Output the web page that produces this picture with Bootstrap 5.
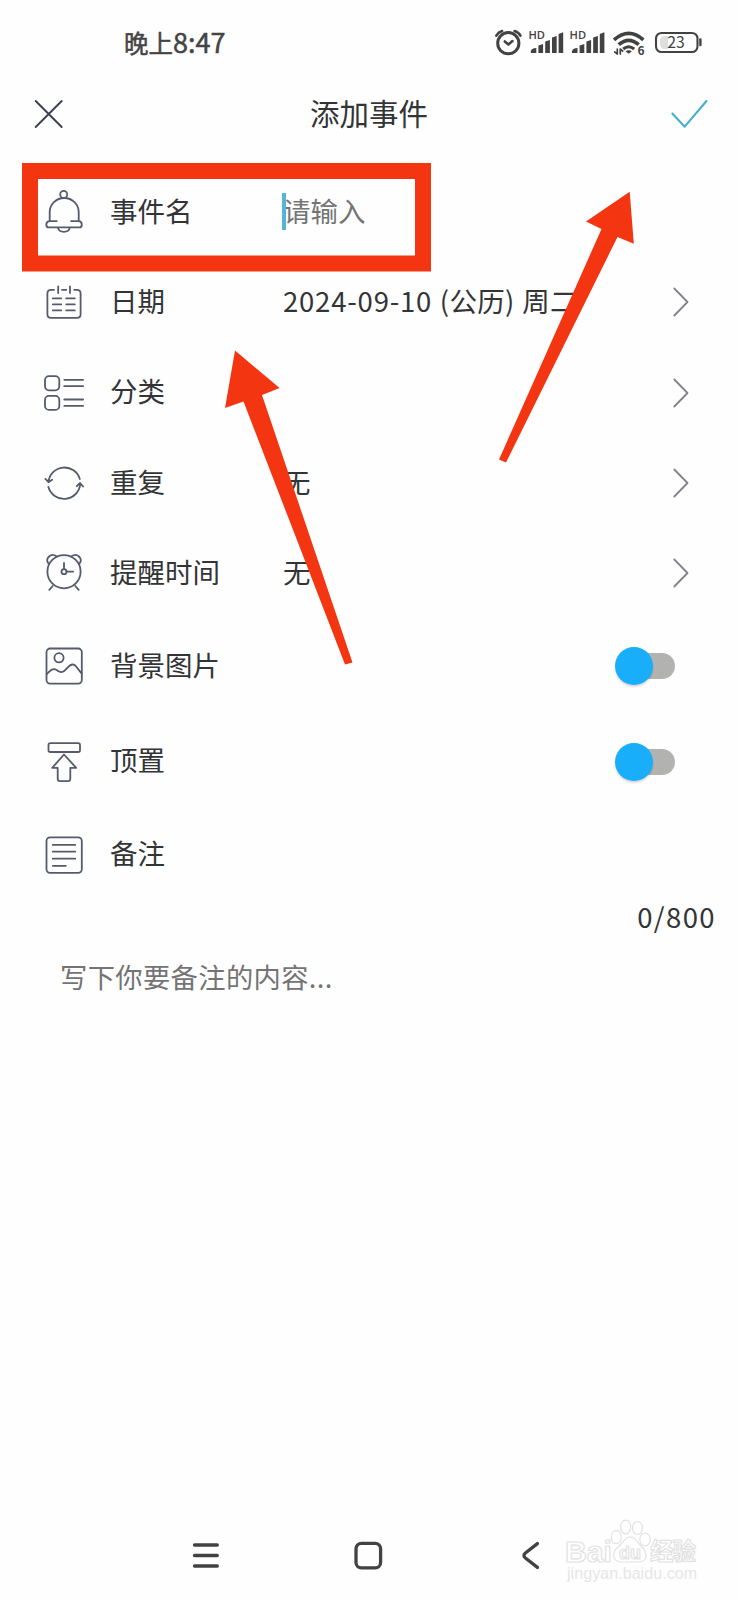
<!DOCTYPE html>
<html lang="zh-CN">
<head>
<meta charset="utf-8">
<meta name="viewport" content="width=device-width, initial-scale=1">
<title>添加事件</title>
<link href="https://cdn.jsdelivr.net/npm/bootstrap@5.3.0/dist/css/bootstrap.min.css" rel="stylesheet">
<script src="https://cdn.jsdelivr.net/npm/bootstrap@5.3.0/dist/js/bootstrap.bundle.min.js"></script>
<style>
body{font-family:"Noto Sans CJK SC",sans-serif;background:#fefefe;color:#333436;line-height:1}
svg{display:block;flex:none;fill:none;stroke-linecap:round;stroke-linejoin:round}
.screen{width:738px;height:1600px;overflow:hidden}
.statusbar{height:84px;padding-left:124px}
.clock{font-size:24.5px;font-weight:400;-webkit-text-stroke:.5px #444;color:#444;padding-bottom:1px}
.clock b{font-size:27px;font-weight:400}
.titlebar{height:60px;padding:0 24px}
.titlebar h1{font-size:29.5px;font-weight:400;color:#333436;padding-bottom:3px}
.form-area{padding-top:23px}
.form-line{height:90.3px;padding-left:40px;font-size:27.5px}
.form-line.tall{height:95.5px}
.line-icon{stroke:#555b6c;stroke-width:1.8}
.line-label{width:195px;padding-left:22px;padding-bottom:3px}
.line-value{padding-bottom:3px}
.date-digits{letter-spacing:.8px}
.date-rest{letter-spacing:.3px;word-spacing:1.2px}
.field{color:#747475}
.caret{width:4px;height:37px;top:-4px;left:-1px;background:#52b6d8}
.chev{stroke:#80838d;stroke-width:1.8;margin-right:44px}
.toggle{width:60px;height:38px;margin-right:63px}
.toggle .track{width:46px;height:26px;top:6px;right:0;border-radius:13px;background:#b2b2b1}
.toggle .knob{width:38px;height:38px;left:0;top:0;border-radius:50%;background:#18aef9;box-shadow:0 2px 2px rgba(0,0,0,.15)}
.counter{height:34px;padding-right:22px;font-size:27.5px;letter-spacing:1.4px}
.memo{font-size:27.3px;letter-spacing:.35px;padding:29px 0 0 60px;color:#747474}
.sysnav{height:90px}
.overlay{left:0;top:0;pointer-events:none;stroke-linejoin:miter}
.overlay path{fill:#f33611}
</style>
</head>
<body>
<main class="screen position-relative d-flex flex-column">
  <header class="statusbar d-flex align-items-center justify-content-between">
    <div class="clock">晚上<b>8:47</b></div>
    <svg width="248" height="84" viewBox="490 0 248 84" stroke="#424242" font-family="Noto Sans CJK SC, sans-serif">
      <g stroke-width="3"><circle cx="508.3" cy="43.2" r="10.6"/><path d="M504.8 41.5l3.6 3 4-3.4" stroke-width="2.6"/><path d="M496.3 35.6q2.2-3.6 5.8-4.6M514.6 31q3.8 1 5.8 4.6" stroke-width="2.6"/></g>
      <g id="sig" fill="#424242" stroke="none">
        <text x="528.4" y="39.4" font-size="10" font-weight="600" font-family="Open Sans, sans-serif" textLength="16.5" lengthAdjust="spacingAndGlyphs">HD</text>
        <path d="M530.8 53v-2q1-3 5.5-3v5zM538.4 53v-7.5l4.7-1.6V53zM545.2 53V41.5l4.7-1.6V53zM552 53V37.5l4.7-1.6V53zM558.6 53V34l4.6-1.8V53z"/>
      </g>
      <use href="#sig" x="41.2"/>
      <g stroke-width="3.6" stroke-linecap="butt"><path d="M614 39.8q14.8-13 29.4 0"/><path d="M618.7 44.6q10-8.6 20 0"/><path d="M623.2 49q5.5-4.6 11 0" stroke-width="3"/></g>
      <path d="M625.5 51.2q3.2-2 6.4 0l-3.2 2.6z" fill="#424242" stroke="none"/>
      <path d="M617.3 49v5l-2.6-2.2M620.3 54v-5l2.4 2.2" stroke-width="1.7"/>
      <text x="637.6" y="54.8" font-size="12" font-weight="700" fill="#424242" stroke="none">6</text>
      <path d="M665 36h3v13h-3q-5 0-5-5v-3q0-5 5-5z" fill="#dedede" stroke="none"/>
      <rect x="656" y="33" width="41.5" height="19" rx="5.5" stroke-width="2.1"/>
      <path d="M700.4 39.5v5.5" stroke-width="2.4"/>
      <text x="667.3" y="48.3" font-size="15.8" fill="#424242" stroke="none" textLength="17.5">23</text>
    </svg>
  </header>

  <div class="titlebar d-flex align-items-center justify-content-between">
    <svg width="50" height="60" viewBox="24 84 50 60" stroke="#3c3f50" stroke-width="1.9"><path d="M35.7 101L61.7 127M61.7 101L35.7 127"/></svg>
    <h1 class="m-0">添加事件</h1>
    <svg width="50" height="60" viewBox="664 84 50 60" stroke="#41add3" stroke-width="2"><path d="M672.3 113.5L684.7 126.7 706.5 101"/></svg>
  </div>

  <section class="form-area">
    <div class="form-line d-flex align-items-center">
      <svg class="line-icon" width="48" height="48" viewBox="40 188 48 48"><circle cx="63.7" cy="194.4" r="3.5"/><path d="M56.7 221.2h-7V212a14.5 14 0 0 1 29 0v9.2h-7.6M49.7 221.2q-3.4.2-3.4 3.2 0 3 2.4 3h30.8q2.3 0 2.3-3 0-3-3.1-3.2M57.9 227.6q1 4.2 6 4.2t6-4.2"/></svg>
      <div class="line-label">事件名</div>
      <div class="line-value field position-relative">请输入<i class="caret position-absolute"></i></div>
    </div>
    <div class="form-line d-flex align-items-center">
      <svg class="line-icon" width="48" height="48" viewBox="40 278 48 48"><path d="M54 289.8h-3q-3.6 0-3.6 3.6v20.8q0 3.6 3.6 3.6h26q3.6 0 3.6-3.6v-20.8q0-3.6-3.6-3.6h-2.8M62 289.8h4.3M58.2 286.3v6.8M70 286.3v6.8M52.8 298.4h8.4M66.2 298.4h8.6M52.8 304.4h8.4M66.2 304.4h8.6M52.8 310.4h8.4M66.2 310.4h8.6"/></svg>
      <div class="line-label">日期</div>
      <div class="line-value text-nowrap"><span class="date-digits">2024-09-10</span><span class="date-rest"> (公历) 周二</span></div>
      <svg class="chev ms-auto" width="24" height="32" viewBox="670 286 24 32"><path d="M674.3 288.5L687.5 302 674.3 315.5"/></svg>
    </div>
    <div class="form-line d-flex align-items-center">
      <svg class="line-icon" width="48" height="48" viewBox="40 368.5 48 48"><rect x="45" y="375.6" width="14.3" height="14.2" rx="4"/><rect x="45" y="395.4" width="14.3" height="14" rx="4"/><path d="M64.3 379.3h18.8M64.3 385.7h18.8M64.3 399h18.8M64.3 405.4h18.8"/></svg>
      <div class="line-label">分类</div>
      <svg class="chev ms-auto" width="24" height="32" viewBox="670 286 24 32"><path d="M674.3 288.5L687.5 302 674.3 315.5"/></svg>
    </div>
    <div class="form-line d-flex align-items-center">
      <svg class="line-icon" width="48" height="48" viewBox="40 458.5 48 48"><path d="M48.5 481.4a16 16 0 0 1 31.3-2.8M45.4 478.4l3.1 3.3 3.7-2.4M48.3 486.3a16.3 16.3 0 0 0 32-3M76.7 485.7l3.4-3.2 3 3.5"/></svg>
      <div class="line-label">重复</div>
      <div class="line-value">无</div>
      <svg class="chev ms-auto" width="24" height="32" viewBox="670 286 24 32"><path d="M674.3 288.5L687.5 302 674.3 315.5"/></svg>
    </div>
    <div class="form-line d-flex align-items-center">
      <svg class="line-icon" width="48" height="48" viewBox="40 549 48 48"><circle cx="64" cy="571.7" r="16.6"/><path d="M48.4 563.5c-3.5-5 2.5-11.3 8-7.2M79.6 563.5c3.5-5-2.5-11.3-8-7.2M52.7 586l-3.4 3.8M75.3 586l3.4 3.8M64 562.8v6.4M66.6 571.7h6.5"/><circle cx="64" cy="571.7" r="2.5"/></svg>
      <div class="line-label">提醒时间</div>
      <div class="line-value">无</div>
      <svg class="chev ms-auto" width="24" height="32" viewBox="670 286 24 32"><path d="M674.3 288.5L687.5 302 674.3 315.5"/></svg>
    </div>
    <div class="form-line tall d-flex align-items-center">
      <svg class="line-icon" width="48" height="48" viewBox="40 642 48 48"><rect x="46.5" y="648.5" width="35.3" height="35.2" rx="3.6"/><circle cx="59" cy="657.8" r="4.6"/><path d="M46.8 674.3q5.5-6.8 9.4-4.6 3.6 3.8 7.6 1.6l4.4-4.3q4.3-4.6 7.7-.8l5.8 7.4"/></svg>
      <div class="line-label">背景图片</div>
      <div class="toggle position-relative ms-auto" role="switch"><i class="track position-absolute"></i><i class="knob position-absolute"></i></div>
    </div>
    <div class="form-line tall d-flex align-items-center">
      <svg class="line-icon" width="48" height="48" viewBox="40 737.5 48 48"><rect x="48.5" y="742.7" width="31.5" height="8.8" rx="1.8"/><path d="M64 754L52.2 767.3h5.5v11q0 2.4 2.4 2.4h7.8q2.4 0 2.4-2.4v-11h5.9z"/></svg>
      <div class="line-label">顶置</div>
      <div class="toggle position-relative ms-auto" role="switch"><i class="track position-absolute"></i><i class="knob position-absolute"></i></div>
    </div>
    <div class="form-line d-flex align-items-center">
      <svg class="line-icon" width="48" height="48" viewBox="40 830.5 48 48"><rect x="46.5" y="836.8" width="35.3" height="35.6" rx="3.6"/><path d="M52.8 844.4h22.4M52.8 851.2h22.4M52.8 858.2h22.4M52.8 865.3h13"/></svg>
      <div class="line-label">备注</div>
    </div>
    <div class="counter d-flex align-items-center justify-content-end">0/800</div>
    <div class="memo">写下你要备注的内容...</div>
  </section>

  <nav class="sysnav mt-auto">
    <svg width="738" height="90" viewBox="0 1510 738 90" stroke="#424242" stroke-width="3.3">
      <path d="M194.5 1545h22.8M194.5 1555.5h22.8M194.5 1566h22.8"/>
      <rect x="356" y="1543.3" width="24.6" height="24.6" rx="5.5"/>
      <path d="M537.4 1543.6l-12 9.4q-3 2.6 0 5l12 9.4"/>
      <g fill="#fff" stroke="#e2e2e2" stroke-width="1.2" font-family="Liberation Sans, Noto Sans CJK SC, sans-serif" font-weight="700">
        <text x="565" y="1561.5" font-size="30" textLength="47" lengthAdjust="spacingAndGlyphs">Bai</text>
        <ellipse cx="616.3" cy="1537" rx="5" ry="6.7"/><ellipse cx="625.7" cy="1527" rx="5" ry="6.8"/><ellipse cx="637.5" cy="1528" rx="5" ry="6.5"/><ellipse cx="645" cy="1539.5" rx="5.2" ry="6.5"/>
        <path d="M630.5 1537q4 0 7 5l7 8q5 11-6 12h-17q-11-1-6.5-12l8-8q3-5 7.5-5z"/>
        <text x="619" y="1558.5" font-size="19" textLength="22" lengthAdjust="spacingAndGlyphs">du</text>
        <text x="650" y="1560" font-size="23.5" textLength="46" font-family="Noto Sans CJK SC, sans-serif">经验</text>
        <text x="567" y="1579" font-size="16" font-weight="400" stroke="none" fill="#e6e6e6" textLength="130">jingyan.baidu.com</text>
      </g>
    </svg>
  </nav>

  <svg class="overlay position-absolute" width="738" height="700" viewBox="0 0 738 700">
    <rect x="30" y="171" width="393" height="92.5" stroke="#f33611" stroke-width="16"/>
    <path d="M235 350.5L279.6 388 262 395 352.5 662.5 345 664.5 243.5 401.5 225 408z"/>
    <path d="M629.7 191.8L633.8 243.7 617.5 237 506 462.5 499 459.5 601.5 229 586 221.5z"/>
  </svg>
</main>
</body>
</html>
